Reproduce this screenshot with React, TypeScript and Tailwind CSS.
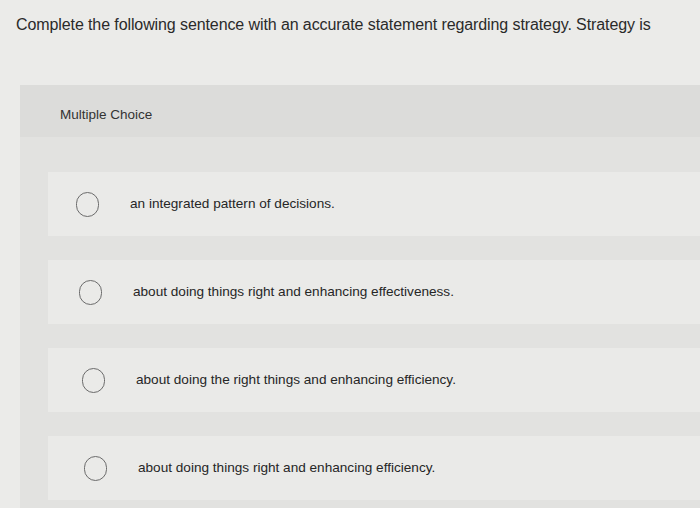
const options = [
  { text: 'an integrated pattern of decisions.', shift: 'pl-[28px]', gap: 'gap-[31px]' },
  { text: 'about doing things right and enhancing effectiveness.', shift: 'pl-[31px]', gap: 'gap-[31px]' },
  { text: 'about doing the right things and enhancing efficiency.', shift: 'pl-[34px]', gap: 'gap-[31px]' },
  { text: 'about doing things right and enhancing efficiency.', shift: 'pl-[36px]', gap: 'gap-[31px]' },
]

export default function App() {
  return (
    <div
      className="w-[700px] h-[508px] overflow-hidden bg-[#ebebe9] text-[#2a2a2a]"
      style={{ fontFamily: '"Liberation Sans", Arial, sans-serif' }}>
      <p className="pl-4 pt-[15px] text-[16px] leading-5 tracking-[-0.1px]">
        Complete the following sentence with an accurate statement regarding strategy. Strategy is
      </p>

      <div className="ml-5 mt-[50px] bg-[#e2e2e0]">
        <div className="h-[52px] bg-[#dcdcda] pl-10 pt-[22px] text-[13.5px] leading-4 text-[#333]">
          Multiple Choice
        </div>

        <div className="pl-7 pt-[35px] flex flex-col gap-[24px] pb-2">
          {options.map(o => (
            <div
              key={o.text}
              className={`h-[64px] bg-[#eaeae8] flex items-center ${o.shift} ${o.gap}`}>
              <span className="w-[23px] h-[25px] rounded-full border-[1.5px] border-[#6b6b6b] shrink-0" />
              <span className="text-[13.6px] text-[#262626]">{o.text}</span>
            </div>
          ))}
        </div>
      </div>
    </div>
  )
}
